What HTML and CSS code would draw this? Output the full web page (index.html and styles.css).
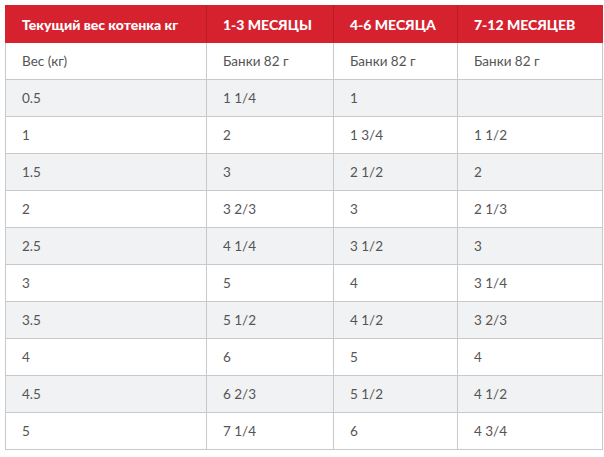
FILE: index.html
```html
<!DOCTYPE html>
<html lang="ru">
<head>
<meta charset="utf-8">
<link rel="stylesheet" href="styles.css">
</head>
<body>
<table class="feed">
  <colgroup>
    <col class="c1"><col class="c2"><col class="c3"><col class="c4">
  </colgroup>
  <thead>
    <tr><th>Текущий вес котенка кг</th><th>1-3 МЕСЯЦЫ</th><th>4-6 МЕСЯЦА</th><th>7-12 МЕСЯЦЕВ</th></tr>
  </thead>
  <tbody>
    <tr><td>Вес (кг)</td><td>Банки 82 г</td><td>Банки 82 г</td><td>Банки 82 г</td></tr>
    <tr><td>0.5</td><td>1 1/4</td><td>1</td><td></td></tr>
    <tr><td>1</td><td>2</td><td>1 3/4</td><td>1 1/2</td></tr>
    <tr><td>1.5</td><td>3</td><td>2 1/2</td><td>2</td></tr>
    <tr><td>2</td><td>3 2/3</td><td>3</td><td>2 1/3</td></tr>
    <tr><td>2.5</td><td>4 1/4</td><td>3 1/2</td><td>3</td></tr>
    <tr><td>3</td><td>5</td><td>4</td><td>3 1/4</td></tr>
    <tr><td>3.5</td><td>5 1/2</td><td>4 1/2</td><td>3 2/3</td></tr>
    <tr><td>4</td><td>6</td><td>5</td><td>4</td></tr>
    <tr><td>4.5</td><td>6 2/3</td><td>5 1/2</td><td>4 1/2</td></tr>
    <tr><td>5</td><td>7 1/4</td><td>6</td><td>4 3/4</td></tr>
  </tbody>
</table>
</body>
</html>
```
FILE: styles.css
```css
html, body {
  margin: 0;
  padding: 0;
  background: #fff;
}
body {
  padding: 5px 3px 0 5px;
  font-family: Lato, "Open Sans", sans-serif;
}
.feed {
  border-collapse: collapse;
  table-layout: fixed;
  width: 597px;
  font-size: 14px;
}
.c1 { width: 201px; }
.c2 { width: 127px; }
.c3 { width: 124px; }
.c4 { width: 145px; }
.feed th,
.feed td {
  height: 37px;
  padding: 0 0 0 16px;
  text-align: left;
  vertical-align: middle;
  box-sizing: border-box;
}
.feed th {
  background: #d6222f;
  color: #fff;
  font-weight: 900;
  font-size: 14px;
  border: 1px solid #d6222f;
  border-left-color: #b81c28;
  border-right-color: #b81c28;
}
.feed th:first-child { border-left-color: #d6222f; }
.feed th:last-child { border-right-color: #d6222f; }
.feed td {
  color: #555;
  font-size: 13.5px;
  border: 1px solid #c9c9c9;
}
.feed tbody tr:nth-child(even) td {
  background: #f1f2f3;
}
```
